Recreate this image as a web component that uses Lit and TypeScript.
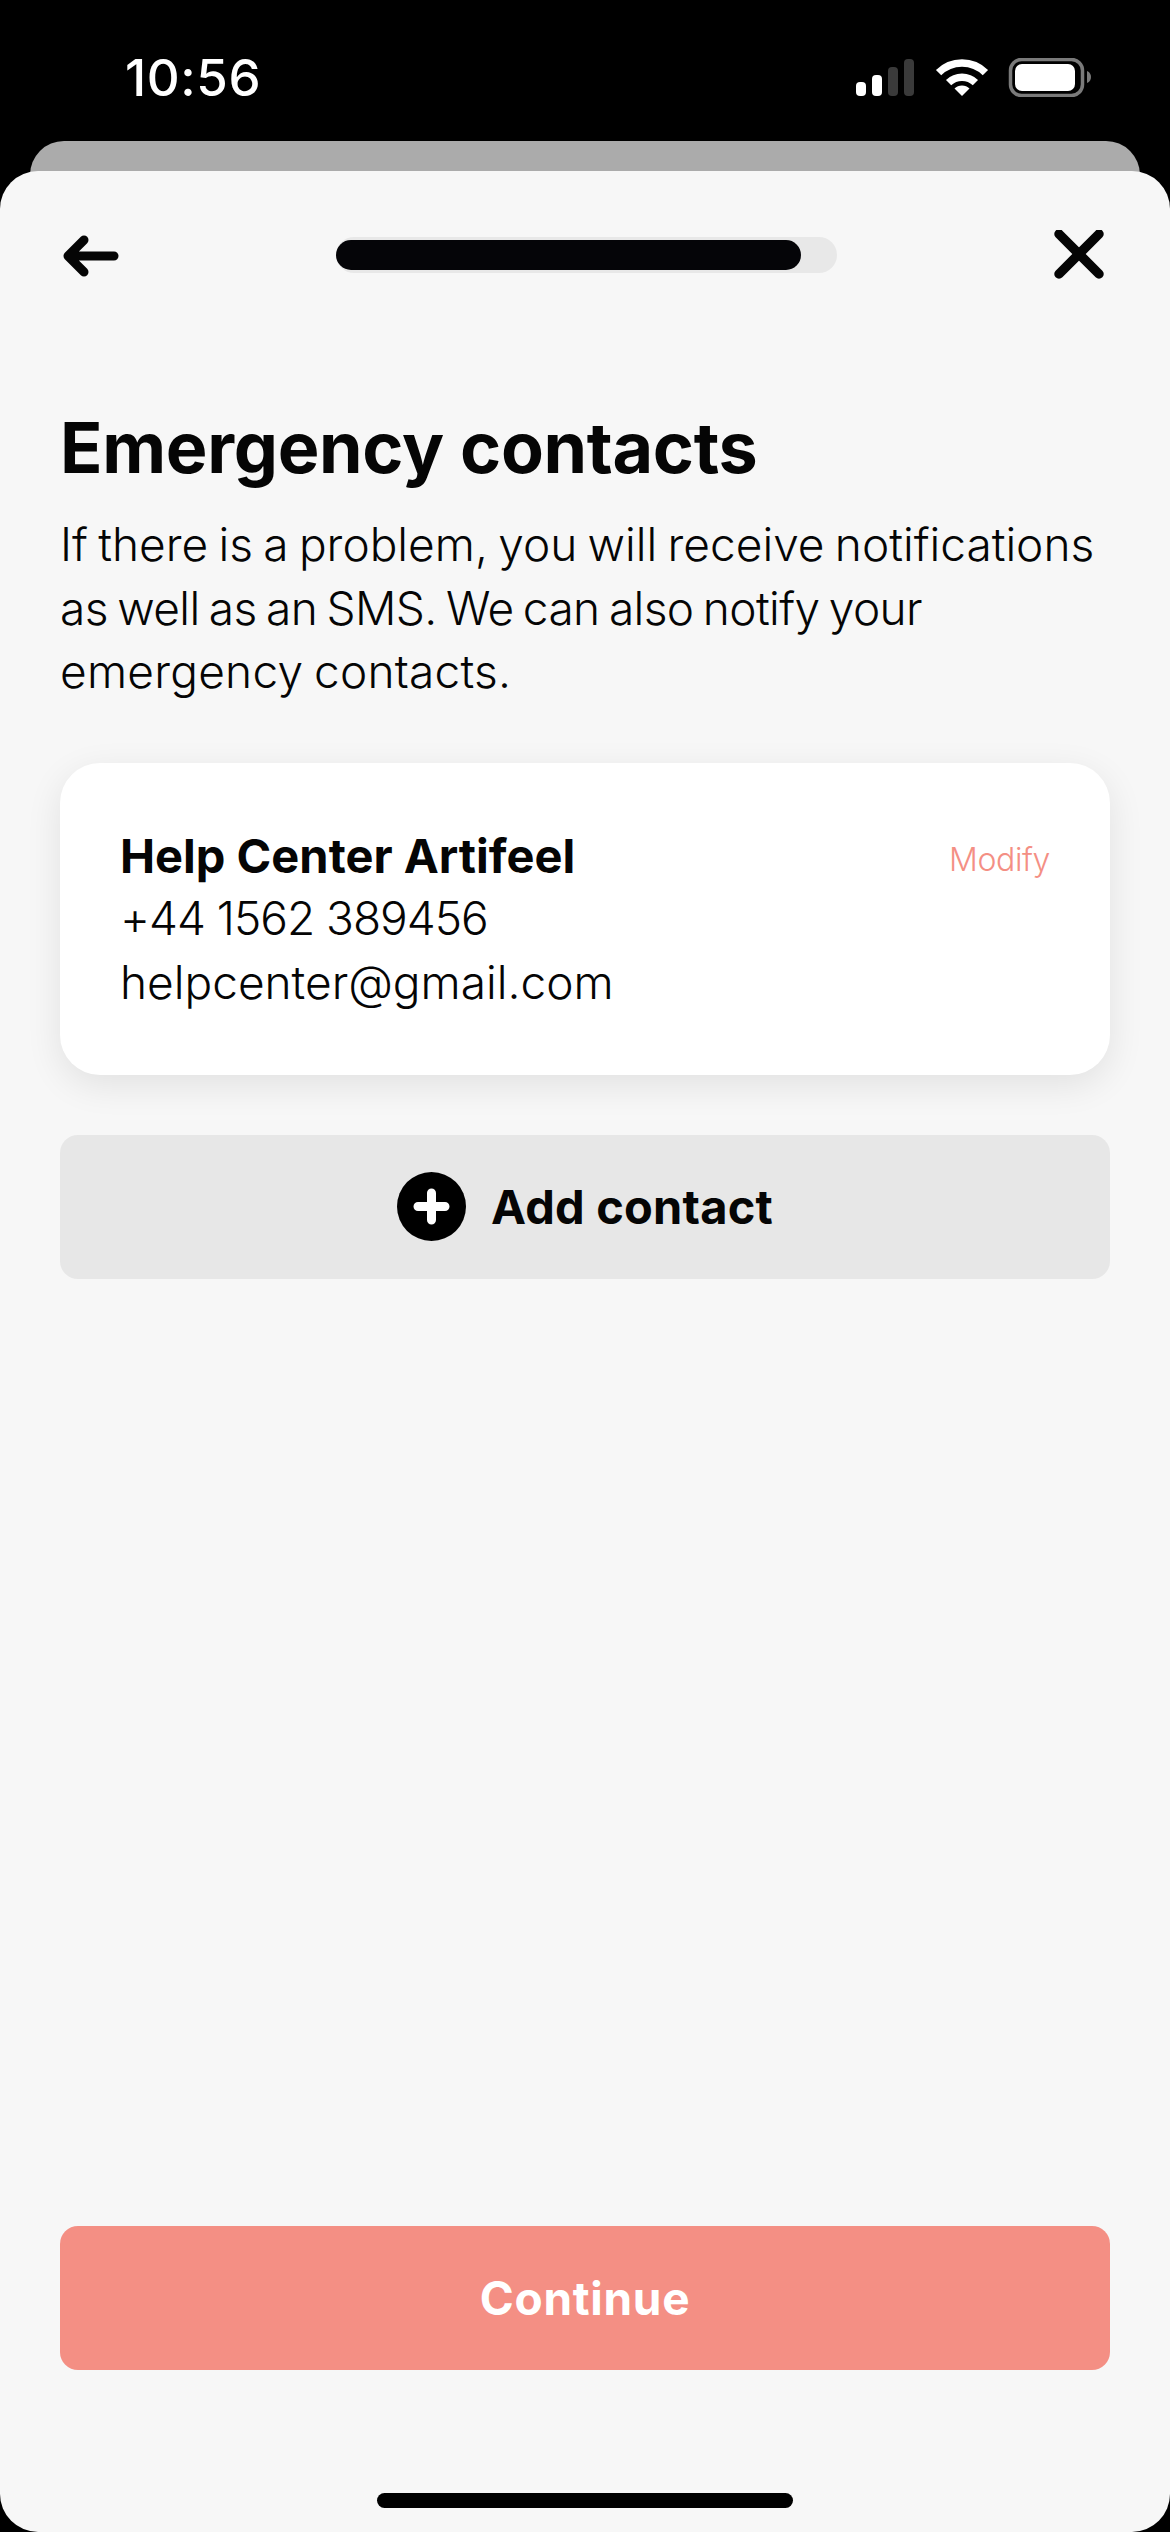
import { LitElement, html, css } from "lit";
import { customElement } from "lit/decorators.js";

@customElement("app-root")
export class AppRoot extends LitElement {
  static styles = css`
    :host { display: block; width: 1170px; height: 2532px; background: #000; font-family: Inter, "Noto Sans", sans-serif; color: #050505; }
    .screen { width: 1170px; height: 2532px; display: flex; flex-direction: column; overflow: hidden; }
    .status { height: 141px; flex: none; display: flex; justify-content: space-between; padding: 53px 79px 0 125px; box-sizing: border-box; }
    .time { color: #fff; font-size: 51px; line-height: 50px; font-weight: 500; letter-spacing: 0.6px; font-family: Inter, sans-serif; }
    .status-icons { width: 235px; height: 39px; margin-top: 5px; display: block; }
    .back-card { flex: none; height: 70px; margin: 0 30px -40px; background: #ababab; border-radius: 34px 34px 0 0; }
    .sheet { flex: 1; background: #f7f7f7; border-radius: 38px; display: flex; flex-direction: column; padding: 0 60px; position: relative; min-height: 0; }
    .nav { height: 60px; margin-top: 54px; display: flex; align-items: center; flex: none; gap: 217px; }
    .nav svg { display: block; flex: none; }
    .back { margin-left: 3px; }
    .close { margin-right: 6px; }
    .track { width: 501px; height: 36px; background: #e8e8e8; border-radius: 18px; display: flex; align-items: center; flex: none; }
    .fill { width: 465px; height: 30px; background: #050508; border-radius: 15px; }
    h1 { margin: 123px 0 0; font-size: 70px; line-height: 80px; font-weight: 700; letter-spacing: -0.3px; }
    .intro { margin: 25px 0 0; font-size: 46px; line-height: 63.5px; font-weight: 300; word-spacing: -2.6px; width: 1050px; white-space: nowrap; }
    .intro span { display: block; }
    .intro .l2 { letter-spacing: -0.6px; word-spacing: -3px; }
    .intro .l3 { letter-spacing: 0.25px; }
    .card { margin-top: 59px; height: 312px; box-sizing: border-box; background: #fff; border-radius: 40px; box-shadow: 0 10px 36px rgba(0,0,0,.09); padding: 61px 60px 0; display: flex; justify-content: space-between; align-items: flex-start; }
    .lines { font-size: 46px; line-height: 63.5px; font-weight: 300; }
    .name { font-weight: 700; font-size: 47px; }
    .phone { letter-spacing: -1px; }
    .modify { color: #f48f84; font-size: 32px; line-height: 40px; font-weight: 300; margin-top: 16px; letter-spacing: -0.4px; }
    .btn { height: 144px; flex: none; border-radius: 18px; display: flex; align-items: center; justify-content: center; font-weight: 700; font-size: 46px; }
    .add { margin-top: 60px; background: #e7e7e7; gap: 25px; font-size: 47px; letter-spacing: 0.2px; }
    .add svg { display: block; width: 69px; height: 69px; }
    .spacer { flex: 1; }
    .continue { background: #f48f84; color: #fff; letter-spacing: 0.7px; }
    .home { flex: none; width: 416px; height: 15px; background: #000; border-radius: 8px; margin: 123px auto 24px; }
  `;

  render() {
    return html`
      <div class="screen">
        <div class="status">
          <div class="time">10:56</div>
          <svg class="status-icons" viewBox="856 58 235 39">
            <rect x="856" y="82" width="10" height="14" rx="4" fill="#fff"/>
            <rect x="872" y="75" width="10" height="21" rx="4" fill="#fff"/>
            <rect x="888" y="67" width="10" height="29" rx="4" fill="#3a3a3a"/>
            <rect x="904" y="59" width="10" height="37" rx="4" fill="#3a3a3a"/>
            <g fill="none" stroke="#fff" stroke-width="7.5">
              <path d="M938.6 72.6A33.2 33.2 0 0 1 985.4 72.6"/>
              <path d="M948.6 82.6A19.2 19.2 0 0 1 975.4 82.6"/>
            </g>
            <path d="M954.5 88.5A10.6 10.6 0 0 1 969.5 88.5L962 96Z" fill="#fff"/>
            <rect x="1010.5" y="59.5" width="72" height="36" rx="11" fill="none" stroke="#7a7a7a" stroke-width="3.5"/>
            <rect x="1015" y="64" width="60" height="27" rx="7" fill="#fff"/>
            <path d="M1087 71C1090 72 1091 75 1091 77C1091 79 1090 82 1087 83Z" fill="#7a7a7a"/>
          </svg>
        </div>
        <div class="back-card"></div>
        <div class="sheet">
          <div class="nav">
            <svg class="back" width="56" height="46" viewBox="0 0 56 46" fill="none" stroke="#050505" stroke-width="9" stroke-linecap="round" stroke-linejoin="round">
              <path d="M51 24H6M21 8L5 24L21 40"/>
            </svg>
            <div class="track"><div class="fill"></div></div>
            <svg class="close" width="50" height="50" viewBox="0 0 50 50" fill="none" stroke="#050505" stroke-width="9.5" stroke-linecap="round">
              <path d="M5 4L45 44M45 4L5 44"/>
            </svg>
          </div>
          <h1>Emergency contacts</h1>
          <p class="intro"><span>If there is a problem, you will receive notifications</span><span class="l2">as well as an SMS. We can also notify your</span><span class="l3">emergency contacts.</span></p>
          <div class="card">
            <div class="lines">
              <div class="name">Help Center Artifeel</div>
              <div class="phone">+44 1562 389456</div>
              <div>helpcenter@gmail.com</div>
            </div>
            <div class="modify">Modify</div>
          </div>
          <div class="btn add">
            <svg viewBox="0 0 69 69"><circle cx="34.5" cy="34.5" r="34.5" fill="#000"/><path d="M34.5 21V48M21 34.5H48" stroke="#fff" stroke-width="9" stroke-linecap="round"/></svg>
            <span>Add contact</span>
          </div>
          <div class="spacer"></div>
          <div class="btn continue">Continue</div>
          <div class="home"></div>
        </div>
      </div>
    `;
  }
}
